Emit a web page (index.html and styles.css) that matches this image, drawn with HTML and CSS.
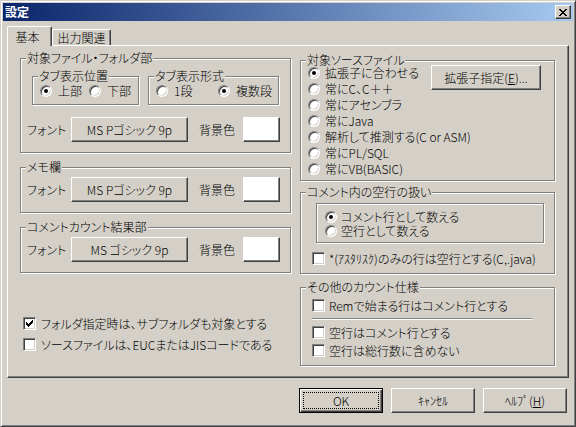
FILE: index.html
```html
<!DOCTYPE html>
<html lang="ja">
<head>
<meta charset="utf-8">
<title>設定</title>
<link rel="stylesheet" href="styles.css">
</head>
<body>
<div class="window">
  <div class="titlebar">
    <span class="title">設定</span>
    <span class="close"><svg width="8" height="7" viewBox="0 0 8 7" shape-rendering="crispEdges"><path d="M0 0h2v1h-2zM6 0h2v1h-2zM1 1h2v1h-2zM5 1h2v1h-2zM2 2h4v1h-4zM3 3h2v1h-2zM2 4h4v1h-4zM1 5h2v1h-2zM5 5h2v1h-2zM0 6h2v1h-2zM6 6h2v1h-2z"/></svg></span>
  </div>
  <div class="tabs">
    <div class="tab active">基本</div>
    <div class="tab">出力関連</div>
  </div>
  <div class="panel">
    <div class="col col-left">
      <div class="group g-font g-first">
        <span class="caption">対象ファイル・フォルダ部</span>
        <div class="subgroups">
          <div class="group sub sub-pos">
            <span class="caption">タブ表示位置</span>
            <label class="opt w49"><span class="radio on"></span>上部</label>
            <label class="opt"><span class="radio"></span>下部</label>
          </div>
          <div class="group sub sub-style">
            <span class="caption">タブ表示形式</span>
            <label class="opt w62"><span class="radio"></span>1段</label>
            <label class="opt"><span class="radio on"></span>複数段</label>
          </div>
        </div>
        <div class="fontrow">
          <span class="flabel">フォント</span>
          <span class="btn fontbtn">MS Pゴシック 9p</span>
          <span class="blabel">背景色</span>
          <span class="btn swatch"></span>
        </div>
      </div>
      <div class="group g-font g-next">
        <span class="caption">メモ欄</span>
        <div class="fontrow first">
          <span class="flabel">フォント</span>
          <span class="btn fontbtn">MS Pゴシック 9p</span>
          <span class="blabel">背景色</span>
          <span class="btn swatch"></span>
        </div>
      </div>
      <div class="group g-font g-next">
        <span class="caption">コメントカウント結果部</span>
        <div class="fontrow first">
          <span class="flabel">フォント</span>
          <span class="btn fontbtn">MS ゴシック 9p</span>
          <span class="blabel">背景色</span>
          <span class="btn swatch"></span>
        </div>
      </div>
      <div class="checks-left">
        <label class="cb-row"><span class="check on"><svg width="7" height="7" viewBox="0 0 7 7" shape-rendering="crispEdges"><path d="M6 0h1v1h-1zM5 1h2v1h-2zM0 2h1v1h-1zM4 2h3v1h-3zM0 3h2v1h-2zM3 3h3v1h-3zM0 4h5v1h-5zM1 5h3v1h-3zM2 6h1v1h-1z"/></svg></span>フォルダ指定時は、サブフォルダも対象とする</label>
        <label class="cb-row"><span class="check"></span>ソースファイルは、EUCまたはJISコードである</label>
      </div>
    </div>
    <div class="col col-right">
      <div class="group g-src">
        <span class="caption">対象ソースファイル</span>
        <div class="radiolist">
          <label class="opt row16"><span class="radio on"></span>拡張子に合わせる</label>
          <label class="opt row16"><span class="radio"></span>常にC、C＋＋</label>
          <label class="opt row16"><span class="radio"></span>常にアセンブラ</label>
          <label class="opt row16"><span class="radio"></span>常にJava</label>
          <label class="opt row16"><span class="radio"></span>解析して推測する(C or ASM)</label>
          <label class="opt row16"><span class="radio"></span>常にPL/SQL</label>
          <label class="opt row16"><span class="radio"></span>常にVB(BASIC)</label>
        </div>
        <span class="btn extbtn">拡張子指定(<u>E</u>)...</span>
      </div>
      <div class="group g-blank">
        <span class="caption">コメント内の空行の扱い</span>
        <div class="group inner">
          <label class="opt"><span class="radio on"></span>コメント行として数える</label>
          <label class="opt"><span class="radio"></span>空行として数える</label>
        </div>
        <label class="cb-row r"><span class="check"></span>*(ｱｽﾀﾘｽｸ)のみの行は空行とする(C,.java)</label>
      </div>
      <div class="group g-other">
        <span class="caption">その他のカウント仕様</span>
        <label class="cb-row r"><span class="check"></span>Remで始まる行はコメント行とする</label>
        <div class="sep"></div>
        <label class="cb-row r"><span class="check"></span>空行はコメント行とする</label>
        <label class="cb-row r last"><span class="check"></span>空行は総行数に含めない</label>
      </div>
    </div>
  </div>
  <div class="buttons">
    <span class="btn dlg default"><span class="focus">OK</span></span>
    <span class="btn dlg">ｷｬﾝｾﾙ</span>
    <span class="btn dlg">ﾍﾙﾌﾟ(<u>H</u>)</span>
  </div>
</div>
</body>
</html>
```
FILE: styles.css
```css
* { box-sizing: border-box; }
html, body { margin: 0; padding: 0; }
body {
  width: 576px;
  height: 427px;
  overflow: hidden;
  background: #d4d0c8;
  color: #000;
  font: 300 12px/14px "Noto Sans CJK JP", "Noto Sans", sans-serif;
  font-feature-settings: "palt";
}
u { text-decoration: underline; text-underline-offset: 1px; }

.window {
  width: 576px;
  height: 427px;
  border: 1px solid;
  border-color: #d4d0c8 #404040 #404040 #d4d0c8;
  box-shadow: inset 1px 1px #fff, inset -1px -1px #808080;
  padding: 2px;
  display: flex;
  flex-direction: column;
}

.titlebar {
  height: 18px;
  flex: none;
  background: linear-gradient(to right, #0a246a, #a6caf0);
  display: flex;
  align-items: center;
  padding: 0 2px;
}
.title { flex: 1; color: #fff; font-weight: bold; }
.close {
  width: 16px;
  height: 14px;
  background: #d4d0c8;
  border: 1px solid;
  border-color: #fff #404040 #404040 #fff;
  box-shadow: inset -1px -1px #808080;
  display: flex;
  align-items: center;
  justify-content: center;
}

.tabs {
  flex: none;
  height: 19px;
  margin-top: 5px;
  padding-left: 4px;
  display: flex;
  align-items: flex-end;
}
.tab {
  height: 16px;
  width: 59px;
  text-align: center;
  line-height: 14px;
  padding-top: 1px;
  border-top: 1px solid #fff;
  border-left: 1px solid #fff;
  border-right: 1px solid #404040;
  border-radius: 2px 2px 0 0;
  box-shadow: inset -1px 0 #808080;
  background: #d4d0c8;
}
.tab.active {
  position: relative;
  z-index: 2;
  width: 45px;
  height: 20px;
  margin-bottom: -1px;
  padding-top: 3px;
  padding-right: 4px;
}

.panel {
  flex: none;
  height: 333px;
  margin: 0 4px;
  border: 1px solid;
  border-color: #fff #404040 #404040 #fff;
  box-shadow: inset -1px -1px #808080;
  padding: 12px 12px 0 12px;
  display: flex;
  gap: 9px;
}
.col-left { width: 271px; flex: none; }
.col-right { width: 255px; flex: none; margin-top: 2px; }

.group {
  position: relative;
  border: 1px solid #808080;
  box-shadow: inset 1px 1px #fff, 1px 1px #fff;
}
.caption {
  position: absolute;
  top: -7px;
  left: 5px;
  padding: 0 1px;
  line-height: 12px;
  background: #d4d0c8;
  white-space: nowrap;
}

.g-font { padding: 17px 0 10px 6px; }
.g-font.g-next { margin-top: 14px; padding-top: 9px; }
.subgroups { display: flex; gap: 9px; margin-left: 5px; }
.sub {
  height: 29px;
  padding: 7px 0 0 7px;
  display: flex;
}
.sub-pos { width: 107px; }
.sub-style { width: 131px; }

.opt {
  display: flex;
  align-items: center;
  gap: 6px;
  height: 14px;
  white-space: nowrap;
}
.w49 { width: 49px; }
.w62 { width: 62px; }

.radio {
  position: relative;
  flex: none;
  width: 12px;
  height: 12px;
  border-radius: 50%;
  background: #fff;
  border: 1px solid;
  border-color: #808080 #fff #fff #808080;
  box-shadow: inset 1px 1px #404040, inset -1px -1px #d4d0c8;
}
.radio.on::after {
  content: "";
  position: absolute;
  left: 3px;
  top: 3px;
  width: 4px;
  height: 4px;
  border-radius: 50%;
  background: #000;
}

.check {
  flex: none;
  width: 13px;
  height: 13px;
  background: #fff;
  border: 1px solid;
  border-color: #808080 #fff #fff #808080;
  box-shadow: inset 1px 1px #404040, inset -1px -1px #d4d0c8;
  display: flex;
  align-items: center;
  justify-content: center;
}

.fontrow {
  display: flex;
  align-items: center;
  height: 25px;
  margin-top: 12px;
}
.fontrow.first { margin-top: 0; }
.flabel { width: 44px; }
.blabel { width: 44px; margin-left: 11px; }

.btn {
  position: relative;
  display: flex;
  align-items: center;
  justify-content: center;
  height: 25px;
  background: #d4d0c8;
  border: 1px solid;
  border-color: #fff #404040 #404040 #fff;
  box-shadow: inset -1px -1px #808080;
  white-space: nowrap;
}
.fontbtn { width: 117px; }
.swatch { width: 37px; background: #fff; }

.checks-left {
  margin-top: 42px;
  padding-left: 3px;
  display: flex;
  flex-direction: column;
  gap: 4px;
}
.cb-row {
  display: flex;
  align-items: center;
  gap: 5px;
  height: 17px;
  white-space: nowrap;
}
.cb-row.r { height: 13px; gap: 4px; }

.g-src {
  display: flex;
  align-items: flex-start;
  padding: 4px 0 3px 7px;
}
.radiolist { width: 123px; flex: none; }
.row16 { height: 16px; gap: 5px; }
.extbtn { width: 110px; }

.g-blank {
  margin-top: 11px;
  padding: 10px 0 8px 11px;
}
.inner {
  width: 228px;
  height: 40px;
  margin-left: 4px;
  margin-bottom: 9px;
  padding: 6px 0 0 8px;
}
.inner .opt { gap: 4px; }

.g-other {
  margin-top: 13px;
  padding: 11px 0 8px 11px;
}
.sep {
  width: 220px;
  height: 2px;
  margin: 6px 0;
  border-top: 1px solid #808080;
  border-bottom: 1px solid #fff;
}
.g-other .cb-row.last { margin-top: 5px; }

.buttons {
  flex: none;
  display: flex;
  justify-content: flex-end;
  gap: 8px;
  margin-top: 10px;
  padding-right: 6px;
}
.dlg { width: 84px; }
.default {
  border-color: #000;
  box-shadow: inset 1px 1px #fff, inset -1px -1px #404040, inset -2px -2px #808080;
}
.focus {
  position: absolute;
  left: 3px;
  top: 3px;
  right: 3px;
  bottom: 3px;
  border: 1px dotted #000;
  display: flex;
  align-items: center;
  justify-content: center;
}
```
